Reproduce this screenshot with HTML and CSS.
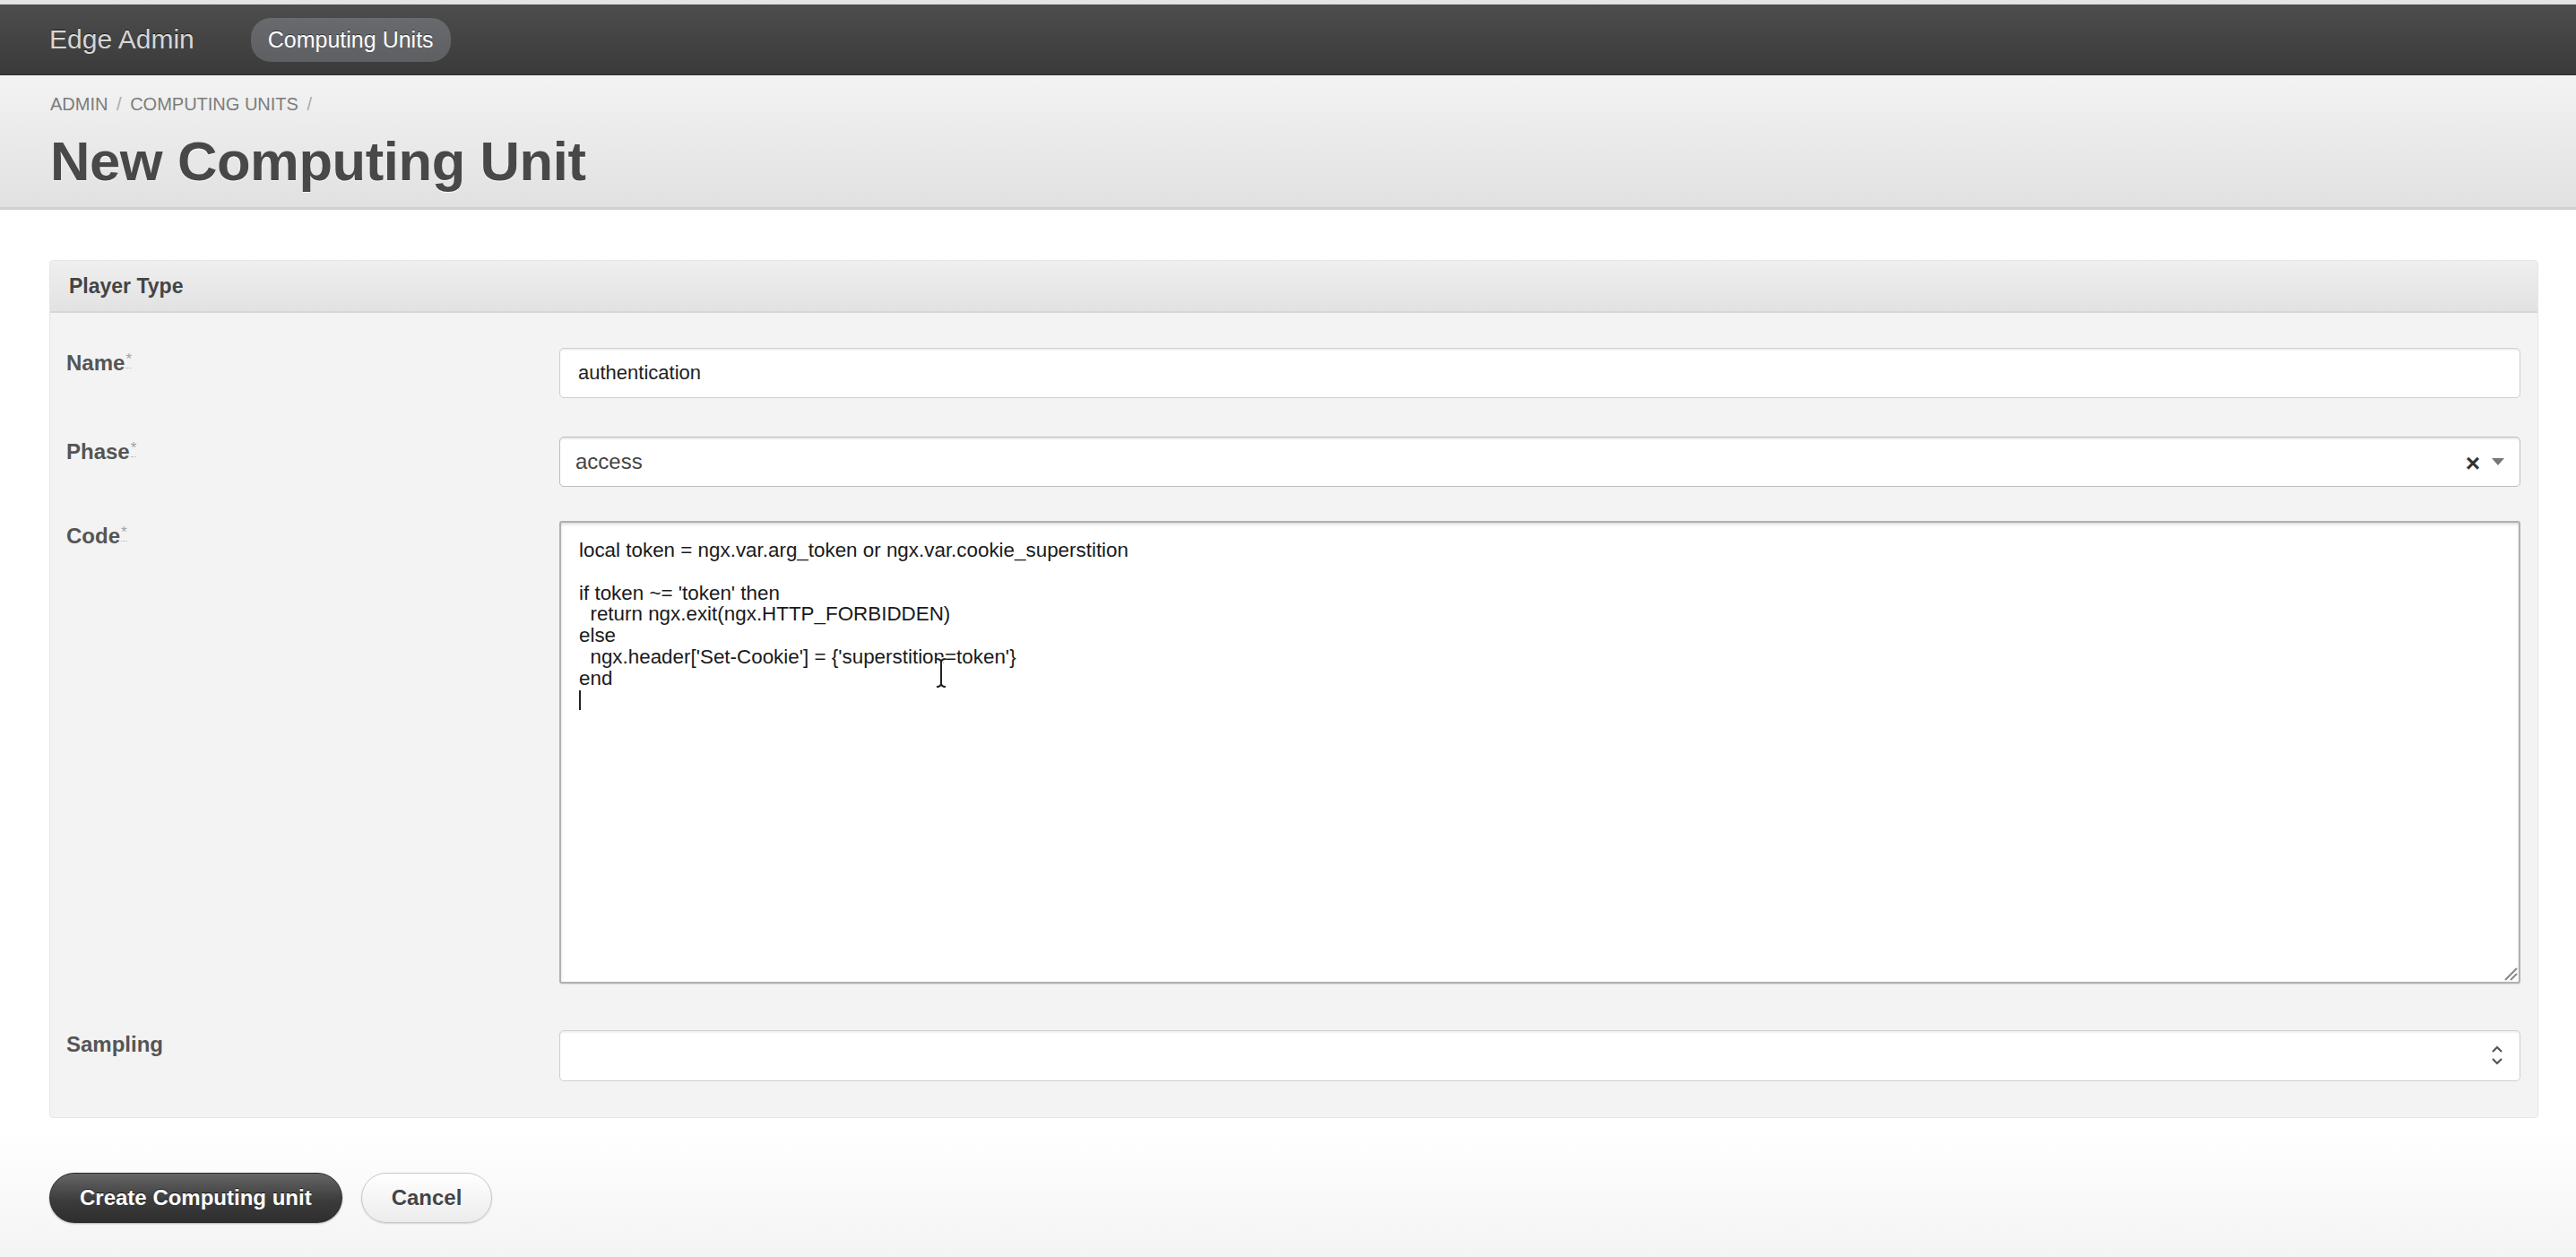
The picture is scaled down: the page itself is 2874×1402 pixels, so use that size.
FILE: index.html
```html
<!DOCTYPE html>
<html lang="en">
<head>
    <meta charset="UTF-8">
    <meta name="viewport" content="width=device-width, initial-scale=1.0">
    <title>New Computing Unit - Edge Admin</title>
    <link rel="stylesheet" href="styles.css">
</head>
<body>
    <div class="topline"></div>
    <nav class="navbar">
        <a class="brand" href="#">Edge Admin</a>
        <a class="nav-pill" href="#">Computing Units</a>
    </nav>

    <header class="page-header">
        <div class="breadcrumb">
            <a href="#">Admin</a> <span class="sep">/</span>
            <a href="#">Computing Units</a> <span class="sep">/</span>
        </div>
        <h1>New Computing Unit</h1>
    </header>

    <main class="content">
        <form class="panel">
            <div class="panel-heading">Player Type</div>
            <div class="panel-body">
                <div class="form-row">
                    <label>Name<abbr title="required">*</abbr></label>
                    <div class="field input">authentication</div>
                </div>

                <div class="form-row">
                    <label>Phase<abbr title="required">*</abbr></label>
                    <div class="field select">
                        <span class="select-value">access</span>
                        <span class="select-clear">&times;</span>
                        <svg class="select-arrow" width="16" height="10" viewBox="0 0 16 10"><path d="M1 1 L15 1 L8 9 Z" fill="#777"/></svg>
                    </div>
                </div>

                <div class="form-row code-row">
                    <label>Code<abbr title="required">*</abbr></label>
                    <div class="field code">
<pre class="code-text">local token = ngx.var.arg_token or ngx.var.cookie_superstition

if token ~= 'token' then
  return ngx.exit(ngx.HTTP_FORBIDDEN)
else
  ngx.header['Set-Cookie'] = {'superstition=token'}
end
<span class="caret"></span></pre>
                        <!-- mouse pointer sitting over the text -->
                        <svg class="ibeam" width="16" height="35" viewBox="0 0 16 35">
                            <path d="M3 2 Q8 2 8 6 Q8 2 13 2 M8 6 V29 M3 33 Q8 33 8 29 Q8 33 13 33" fill="none" stroke="#fff" stroke-width="5"/>
                            <path d="M3 2 Q8 2 8 6 Q8 2 13 2 M8 6 V29 M3 33 Q8 33 8 29 Q8 33 13 33" fill="none" stroke="#222" stroke-width="2"/>
                        </svg>
                        <svg class="grip" width="18" height="18" viewBox="0 0 18 18"><path d="M4 17 L17 4 M10 17 L17 10" stroke="#888" stroke-width="2"/></svg>
                    </div>
                </div>

                <div class="form-row sampling-row">
                    <label class="plain">Sampling</label>
                    <div class="field input number">
                        <svg class="spinner" width="16" height="26" viewBox="0 0 16 26"><path d="M3 9 L8 4 L13 9 M3 17 L8 22 L13 17" fill="none" stroke="#555" stroke-width="2.2"/></svg>
                    </div>
                </div>
            </div>
        </form>

        <div class="actions">
            <button class="btn btn-dark" type="button">Create Computing unit</button>
            <button class="btn btn-light" type="button">Cancel</button>
        </div>
    </main>
</body>
</html>
```

FILE: styles.css
```css
html, body {
    height: 100%;
}
body {
    margin: 0;
    font-family: "Liberation Sans", Arial, Helvetica, sans-serif;
    color: #444;
    background: linear-gradient(to bottom, #fff 0, #fff 1260px, #f4f4f4 100%);
}
a {
    text-decoration: none;
    color: inherit;
}

/* Top bar */
.topline {
    height: 5px;
    background-color: #e4e4e4;
}
.navbar {
    display: flex;
    align-items: center;
    height: 78px;
    padding-left: 55px;
    background: linear-gradient(to bottom, #4d4d4d, #3a3a3a);
    border-bottom: 1px solid #2c2c2c;
}
.brand {
    font-size: 30px;
    color: #d6d6d6;
    text-shadow: 0 -1px 0 rgba(0, 0, 0, 0.6);
    margin-right: 63px;
}
.nav-pill {
    display: flex;
    align-items: center;
    height: 49px;
    padding: 0 19px;
    border-radius: 22px;
    background: linear-gradient(to bottom, #686a6d, #5d5f62);
    color: #fff;
    font-size: 25px;
    text-shadow: 0 -1px 0 rgba(0, 0, 0, 0.5);
}

/* Page header */
.page-header {
    height: 150px;
    box-sizing: border-box;
    padding: 21px 56px 0;
    background: linear-gradient(to bottom, #f3f3f3, #e1e1e1);
    border-bottom: 3px solid #cfcfcf;
}
.breadcrumb {
    font-size: 20px;
    color: #7c7c7c;
    text-transform: uppercase;
}
.breadcrumb .sep {
    color: #aaa;
    margin: 0 4px;
}
h1 {
    margin: 16px 0 0;
    font-size: 61.5px;
    font-weight: bold;
    color: #484848;
    letter-spacing: -0.4px;
    text-shadow: 0 1px 0 #fff;
}

/* Content */
.content {
    padding: 56px 42px 0 55px;
}
.panel {
    display: block;
    background-color: #f3f3f3;
    border: 1px solid #e6e6e6;
    border-radius: 4px;
}
.panel-heading {
    height: 56px;
    line-height: 56px;
    padding-left: 21px;
    font-size: 23px;
    font-weight: bold;
    color: #444;
    background: linear-gradient(to bottom, #efefef, #e2e2e2);
    border-bottom: 2px solid #d6d6d6;
    border-radius: 4px 4px 0 0;
}
.panel-body {
    display: flex;
    flex-direction: column;
    gap: 43px;
    padding: 39px 19px 40px 18px;
}
.form-row {
    display: grid;
    grid-template-columns: 550px 1fr;
    align-items: start;
}
.code-row {
    margin-top: -5px;
}
.sampling-row {
    margin-top: 9px;
}
label {
    padding-top: 3px;
    font-size: 24px;
    font-weight: bold;
    color: #555;
}
label.plain {
    padding-top: 2px;
}
abbr {
    font-size: 17px;
    font-weight: normal;
    color: #a4a4a4;
    vertical-align: 7px;
    text-decoration: none;
    border-bottom: 1px dotted #b5b5b5;
    margin-left: 1px;
}

/* Fields */
.field {
    position: relative;
    box-sizing: border-box;
    background-color: #fff;
    border: 1px solid #cfcfcf;
    border-radius: 5px;
    box-shadow: inset 0 2px 2px rgba(0, 0, 0, 0.06);
}
.input {
    height: 56px;
    line-height: 54px;
    padding-left: 20px;
    font-size: 22px;
    color: #222;
}
.select {
    display: flex;
    align-items: center;
    height: 56px;
    padding: 0 16px 0 17px;
    border-color: #bdbdbd;
    box-shadow: inset 0 2px 1px rgba(0, 0, 0, 0.08);
}
.select-value {
    flex: 1;
    font-size: 24px;
    color: #444;
}
.select-clear {
    font-size: 28px;
    font-weight: bold;
    color: #333;
    margin-right: 12px;
    margin-top: 4px;
}
.code {
    height: 516px;
    border: 2px solid #b0b0b0;
    border-radius: 3px;
    box-shadow: inset 0 2px 3px rgba(0, 0, 0, 0.14), 0 1px 1px rgba(0, 0, 0, 0.1);
}
.code-text {
    margin: 0;
    padding: 19px 20px 15px;
    font-family: "Liberation Sans", Arial, Helvetica, sans-serif;
    font-size: 22.4px;
    line-height: 23.8px;
    color: #1a1a1a;
}
.caret {
    display: inline-block;
    width: 2px;
    height: 22px;
    vertical-align: -4px;
    background-color: #222;
}
.ibeam {
    position: absolute;
    left: 416px;
    top: 150px;
}
.grip {
    position: absolute;
    right: 1px;
    bottom: 1px;
}
.number {
    height: 57px;
}
.spinner {
    position: absolute;
    right: 17px;
    top: 14px;
}

/* Buttons */
.actions {
    display: flex;
    gap: 21px;
    margin-top: 61px;
}
.btn {
    height: 56px;
    border-radius: 28px;
    font-family: "Liberation Sans", Arial, Helvetica, sans-serif;
    font-size: 24px;
    font-weight: bold;
    cursor: pointer;
}
.btn-dark {
    padding: 0 33px;
    color: #fff;
    background: linear-gradient(to bottom, #666, #3c3c3c 55%, #2e2e2e);
    border: 1px solid #2a2a2a;
    text-shadow: 0 -1px 0 rgba(0, 0, 0, 0.7);
    box-shadow: 0 1px 2px rgba(0, 0, 0, 0.3);
}
.btn-light {
    padding: 0 33px;
    color: #444;
    background: linear-gradient(to bottom, #fff, #ececec);
    border: 1px solid #c8c8c8;
    text-shadow: 0 1px 0 #fff;
    box-shadow: 0 1px 2px rgba(0, 0, 0, 0.15);
}
```
